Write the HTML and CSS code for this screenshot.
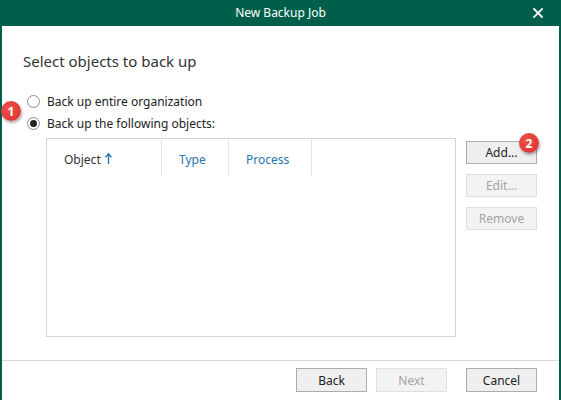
FILE: index.html
```html
<!DOCTYPE html>
<html>
<head>
<meta charset="utf-8">
<link rel="stylesheet" href="styles.css">
</head>
<body>
<div class="window">
  <div class="titlebar">
    <span></span>
    <span class="title">New Backup Job</span>
    <span class="close"><svg width="10" height="10" viewBox="0 0 10 10"><path d="M1 1L9 9M9 1L1 9" stroke="#fff" stroke-width="1.8" stroke-linecap="square"/></svg></span>
  </div>
  <div class="content">
    <h1 class="heading">Select objects to back up</h1>
    <div class="options">
      <label class="radio"><span class="dot"></span>Back up entire organization</label>
      <label class="radio checked"><span class="dot"></span>Back up the following objects:</label>
      <span class="badge badge-one">1</span>
    </div>
    <div class="main">
      <div class="list">
        <div class="list-header">
          <div class="col col-object">Object <svg class="arrow" width="7" height="11" viewBox="0 0 7 11"><path d="M3.5 1.2V11" stroke="#2a74ad" stroke-width="1.4"/><path d="M0.6 4.2L3.5 0.8L6.4 4.2" fill="none" stroke="#2a74ad" stroke-width="1.4"/></svg></div>
          <div class="col col-type">Type</div>
          <div class="col col-process">Process</div>
        </div>
      </div>
      <div class="side">
        <div class="btn-wrap">
          <button class="btn">Add...</button>
          <span class="badge badge-two">2</span>
        </div>
        <button class="btn disabled">Edit...</button>
        <button class="btn disabled">Remove</button>
      </div>
    </div>
  </div>
  <div class="footer">
    <button class="btn">Back</button>
    <button class="btn disabled">Next</button>
    <button class="btn cancel">Cancel</button>
  </div>
</div>
</body>
</html>
```
FILE: styles.css
```css
* { box-sizing: border-box; }
html, body { margin: 0; padding: 0; }
body {
  width: 561px;
  height: 400px;
  overflow: hidden;
  font-family: "Noto Sans", "Open Sans", sans-serif;
  font-size: 12px;
  color: #222;
  background: #fff;
}
.window {
  width: 561px;
  height: 400px;
  display: flex;
  flex-direction: column;
  border-left: 2px solid #005f4a;
  border-right: 2px solid #005f4a;
}
.titlebar {
  height: 26px;
  flex: none;
  background: #005f4a;
  display: grid;
  grid-template-columns: 1fr auto 1fr;
  align-items: center;
  color: #fff;
  margin: 0 -2px;
}
.title { font-size: 12px; line-height: 26px; }
.close {
  justify-self: end;
  width: 10px;
  height: 10px;
  margin-right: 18px;
  display: flex;
}
.content {
  flex: 1;
  padding: 25px 22px 0 21px;
  display: flex;
  flex-direction: column;
}
.heading {
  margin: 0;
  font-weight: normal;
  font-size: 15px;
  line-height: 20px;
  color: #333;
}
.options {
  position: relative;
  margin-top: 19px;
  display: flex;
  flex-direction: column;
}
.radio {
  display: flex;
  align-items: center;
  height: 22px;
  gap: 7px;
  color: #222;
}
.dot {
  width: 13px;
  height: 13px;
  border-radius: 50%;
  border: 1px solid #8a8a8a;
  background: #fff;
  margin-left: 4px;
  display: flex;
  align-items: center;
  justify-content: center;
}
.checked .dot::after {
  content: "";
  width: 7px;
  height: 7px;
  border-radius: 50%;
  background: #222;
}
.badge {
  position: absolute;
  width: 20px;
  height: 20px;
  border-radius: 50%;
  background: radial-gradient(circle at 40% 35%, #f2504b, #d62f2a);
  color: #fff;
  font-size: 12px;
  font-weight: bold;
  display: flex;
  align-items: center;
  justify-content: center;
  box-shadow: 1px 2px 3px rgba(0,0,0,0.35);
}
.badge-one { left: -22px; top: 11px; }
.main {
  margin-top: 4px;
  display: flex;
  gap: 10px;
  padding-left: 23px;
}
.list {
  width: 410px;
  height: 199px;
  flex: none;
  border: 1px solid #d5d5d5;
}
.list-header {
  display: flex;
  height: 37px;
}
.col {
  display: flex;
  align-items: center;
  padding-left: 17px;
  padding-top: 3px;
  border-right: 1px solid #e6e6e6;
}
.col-object { width: 115px; color: #333; }
.col-type { width: 67px; color: #2a74ad; }
.col-process { width: 83px; color: #2a74ad; }
.arrow { margin-left: 4px; margin-top: -2px; }
.side {
  display: flex;
  flex-direction: column;
  gap: 10px;
  padding-top: 3px;
}
.btn-wrap { position: relative; display: flex; }
.badge-two { left: 53px; top: -8px; }
.btn {
  width: 71px;
  height: 23px;
  font-family: inherit;
  font-size: 12px;
  color: #222;
  background: #efefef;
  border: 1px solid #adadad;
  padding: 0;
  margin: 0;
}
.btn.disabled {
  color: #a3a3a3;
  background: #f3f3f3;
  border-color: #e0e0e0;
}
.footer {
  height: 40px;
  flex: none;
  border-top: 1px solid #d9d9d9;
  display: flex;
  justify-content: flex-end;
  align-items: flex-start;
  padding: 7px 22px 0 0;
  gap: 9px;
}
.footer .btn { height: 24px; }
.footer .cancel { margin-left: 10px; }
```
